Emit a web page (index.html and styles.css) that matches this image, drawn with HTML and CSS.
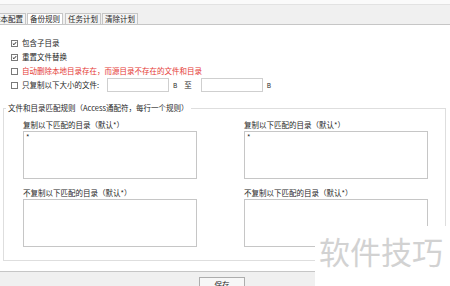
FILE: index.html
```html
<!DOCTYPE html>
<html lang="zh-CN">
<head>
  <meta charset="UTF-8" />
  <title>备份规则</title>
  <link rel="stylesheet" href="styles.css">
</head>
<body>
  <div class="top-strip"></div>

  <!-- Tabs -->
  <div class="tab-bar">
    <span class="tab first">基本配置</span>
    <span class="tab active">备份规则</span>
    <span class="tab third">任务计划</span>
    <span class="tab">清除计划</span>
  </div>

  <main class="panel">
    <ul class="options">
      <li>
        <span class="cb checked"><svg viewBox="0 0 7 7"><polyline points="1.2,3.6 2.8,5.2 5.8,1.6" /></svg></span>
        包含子目录
      </li>
      <li>
        <span class="cb checked"><svg viewBox="0 0 7 7"><polyline points="1.2,3.6 2.8,5.2 5.8,1.6" /></svg></span>
        重置文件替换
      </li>
      <li class="warn">
        <span class="cb"></span>
        自动删除本地目录存在，而源目录不存在的文件和目录
      </li>
      <li>
        <span class="cb"></span>
        <span class="size-label">只复制以下大小的文件:</span>
        <input class="size-input" type="text">
        <span class="unit">B</span>
        <span class="to">至</span>
        <input class="size-input" type="text">
        <span class="unit">B</span>
      </li>
    </ul>

    <fieldset class="rules">
      <legend>文件和目录匹配规则（Access通配符，每行一个规则）</legend>
      <div class="rule-grid">
        <div class="rule">
          <label>复制以下匹配的目录（默认*）</label>
          <textarea>*</textarea>
        </div>
        <div class="rule">
          <label>复制以下匹配的目录（默认*）</label>
          <textarea>*</textarea>
        </div>
        <div class="rule lower">
          <label>不复制以下匹配的目录（默认*）</label>
          <textarea></textarea>
        </div>
        <div class="rule lower">
          <label>不复制以下匹配的目录（默认*）</label>
          <textarea></textarea>
        </div>
      </div>
    </fieldset>
  </main>

  <footer class="footer">
    <button class="save-btn">保存</button>
  </footer>

  <div class="watermark">软件技巧</div>
</body>
</html>
```

FILE: styles.css
```css
:root {
  --text: #262626;
  --bar: #f0f0f0;
  --line: #c6c6c6;
  --soft-line: #dedede;
  --warn: #e53935;
}

* {
  box-sizing: border-box;
}

html, body {
  margin: 0;
  width: 450px;
  height: 286px;
  overflow: hidden;
}

body {
  position: relative;
  display: flex;
  flex-direction: column;
  background: #fff;
  color: var(--text);
  font-family: "Noto Sans CJK SC", "Liberation Sans", sans-serif;
  font-size: 7.5px;
  line-height: 10px;
}

/* Top strip + tabs */
.top-strip {
  height: 5px;
  background: #fafafa;
  border-bottom: 1px solid #e2e2e2;
}

.tab-bar {
  display: flex;
  align-items: flex-end;
  height: 20px;
  padding-top: 8px;
  background: var(--bar);
  border-bottom: 1px solid var(--line);
}

.tab {
  height: 11px;
  padding: 0 2px;
  line-height: 10px;
  white-space: nowrap;
  border: 1px solid var(--line);
  border-bottom: none;
  background: #f3f3f3;
  margin-left: 1px;
}

.tab.first {
  margin-left: -10px;
}

.tab.third {
  margin-left: 2px;
}

.tab.active {
  background: #fff;
}

/* Main panel */
.panel {
  flex: 1;
  padding-top: 11px;
}

.options {
  list-style: none;
  margin: 0;
  padding: 0 0 0 11px;
}

.options li {
  display: flex;
  align-items: center;
  height: 14px;
  white-space: nowrap;
}

.options li.warn {
  color: var(--warn);
}

.cb {
  display: inline-flex;
  width: 7px;
  height: 7px;
  margin-right: 4px;
  border: 1px solid #7a7a7a;
  background: #fff;
}

.cb svg {
  width: 5px;
  height: 5px;
}

.cb polyline {
  fill: none;
  stroke: #222;
  stroke-width: 1.4;
}

.size-label {
  width: 85px;
}

.size-input {
  width: 62px;
  height: 14px;
  margin: 0;
  padding: 0;
  border: 1px solid #cfcfcf;
  background: #fff;
}

.unit {
  margin: 0 4px;
  font-size: 6.5px;
}

.to {
  margin: 0 9px 0 3px;
}

/* Rule groupbox */
.rules {
  margin: 11px 4px 0 3px;
  padding: 7px 0 13px 0;
  border: 1px solid var(--soft-line);
  min-width: 0;
}

.rules legend {
  padding: 0 2px;
  margin-left: 2px;
  line-height: 10px;
}

.rule-grid {
  display: grid;
  grid-template-columns: 174px 184px;
  column-gap: 47px;
  padding-left: 19px;
}

.rule {
  display: flex;
  flex-direction: column;
}

.rule.lower {
  margin-top: 9px;
}

.rule label {
  height: 10px;
  margin-bottom: 1px;
  white-space: nowrap;
}

.rule textarea {
  height: 48px;
  margin: 0;
  padding: 1px 2px;
  resize: none;
  border: 1px solid var(--line);
  font: inherit;
  color: var(--text);
  line-height: 8px;
}

/* Footer */
.footer {
  height: 15px;
  padding: 5px 0 0 199px;
  background: var(--bar);
  border-top: 1px solid var(--line);
}

.save-btn {
  display: block;
  width: 46px;
  height: 14px;
  padding: 2px 0 0;
  border: 1px solid #adadad;
  background: #f7f7f7;
  font: inherit;
  color: var(--text);
  text-align: center;
  vertical-align: top;
}

/* Watermark over the corner */
.watermark {
  position: absolute;
  left: 315px;
  top: 226px;
  width: 135px;
  height: 60px;
  padding: 5px 0 0 4px;
  background: #fff;
  color: #d2d2d2;
  font-size: 31px;
  line-height: 40px;
  white-space: nowrap;
}
```
